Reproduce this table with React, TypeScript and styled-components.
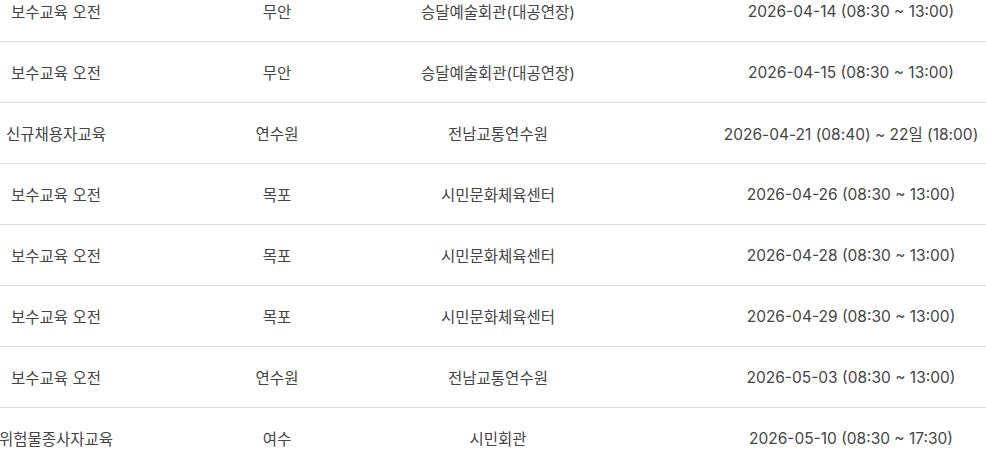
import React from "react";
import styled, { createGlobalStyle } from "styled-components";

type Row = {
  course: string;
  region: string;
  place: string;
  date: string;
};

const rows: Row[] = [
  { course: "보수교육 오전", region: "무안", place: "승달예술회관(대공연장)", date: "2026-04-14 (08:30 ~ 13:00)" },
  { course: "보수교육 오전", region: "무안", place: "승달예술회관(대공연장)", date: "2026-04-15 (08:30 ~ 13:00)" },
  { course: "신규채용자교육", region: "연수원", place: "전남교통연수원", date: "2026-04-21 (08:40) ~ 22일 (18:00)" },
  { course: "보수교육 오전", region: "목포", place: "시민문화체육센터", date: "2026-04-26 (08:30 ~ 13:00)" },
  { course: "보수교육 오전", region: "목포", place: "시민문화체육센터", date: "2026-04-28 (08:30 ~ 13:00)" },
  { course: "보수교육 오전", region: "목포", place: "시민문화체육센터", date: "2026-04-29 (08:30 ~ 13:00)" },
  { course: "보수교육 오전", region: "연수원", place: "전남교통연수원", date: "2026-05-03 (08:30 ~ 13:00)" },
  { course: "위험물종사자교육", region: "여수", place: "시민회관", date: "2026-05-10 (08:30 ~ 17:30)" },
];

const App: React.FC = () => {
  return (
    <>
      <GlobalStyle />
      <Page>
        <Table>
          {rows.map((row, i) => (
            <TableRow key={i}>
              <Cell>{row.course}</Cell>
              <Cell>{row.region}</Cell>
              <Cell>{row.place}</Cell>
              <Cell>{row.date}</Cell>
            </TableRow>
          ))}
        </Table>
      </Page>
    </>
  );
};

export default App;

const GlobalStyle = createGlobalStyle`
  html, body {
    margin: 0;
    padding: 0;
    background: #ffffff;
  }
  body {
    font-family: Inter, "Noto Sans CJK KR", sans-serif;
    color: #444444;
  }
`;

const Page = styled.div`
  width: 986px;
  height: 459px;
  overflow: hidden;
`;

const Table = styled.div`
  margin-top: -19px;
  display: flex;
  flex-direction: column;
`;

const TableRow = styled.div`
  display: grid;
  grid-template-columns: 112px 330px 112px 594px;
  height: 60px;
  border-bottom: 1px solid #dddddd;
`;

const Cell = styled.div`
  display: flex;
  align-items: center;
  justify-content: center;
  white-space: nowrap;
  font-size: 15.5px;
  color: #444444;
`;
